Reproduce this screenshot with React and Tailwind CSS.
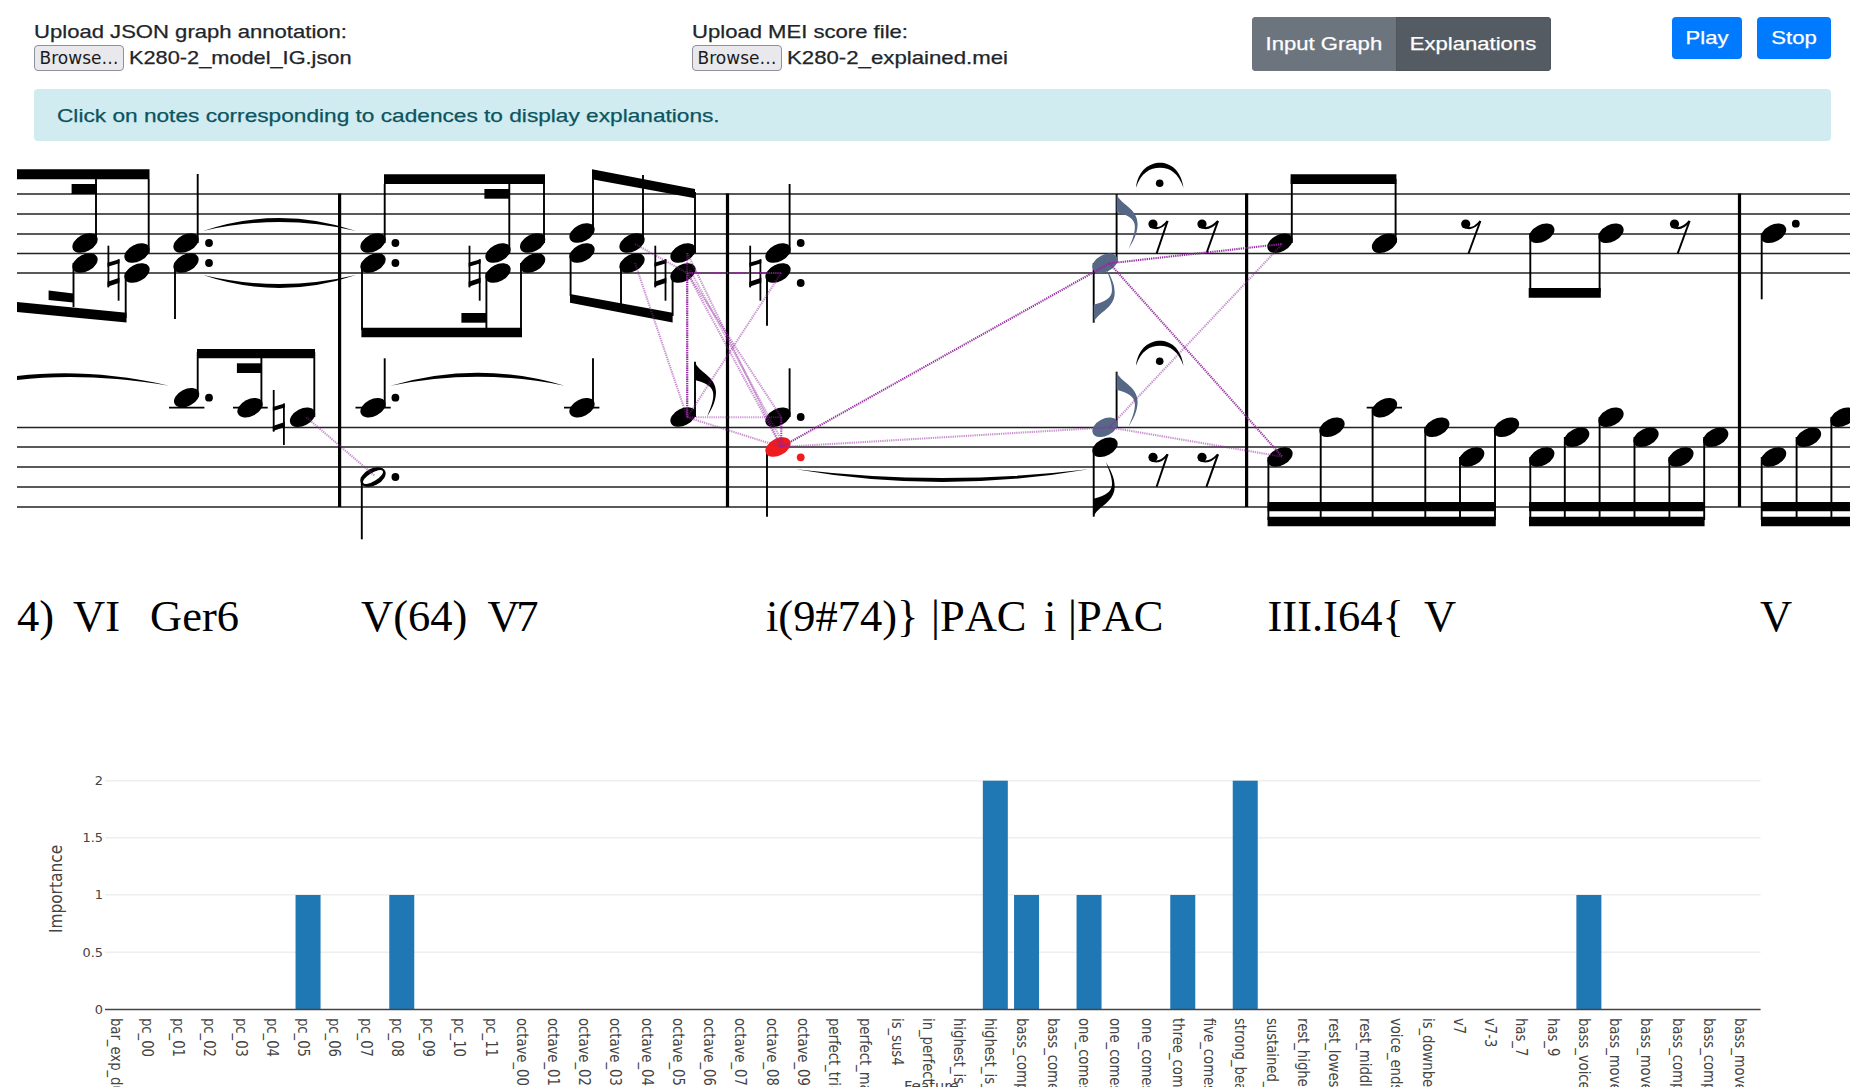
import React from "react";

const STAFF = [194, 214, 234, 253.5, 273, 427.5, 447, 467, 487, 507];
const BARLINES = [339.6, 727.5, 1246.6, 1739.5];
const SLATE = "#566885";
const RED = "#ee1c1c";

// [x, y, color]
const NOTES = [
  [85, 243], [85, 263], [137, 253], [137, 273], [186, 243], [186, 263],
  [373, 243], [373, 263], [498, 253], [498, 273], [532.6, 243], [532.6, 263],
  [582, 233], [582, 253], [632, 243], [632, 263], [683, 253], [683, 273],
  [778, 253], [778, 273], [1105, 263.3, SLATE], [1280, 243.3], [1384.5, 243.3],
  [1541.8, 233.3], [1611, 233.3], [1773.6, 233.3],
  [186.6, 397.7], [250, 407.7], [302.5, 417.3], [373, 407.7], [582, 407.7],
  [683, 417], [778, 417.3], [778, 447, RED], [1105, 427.3, SLATE], [1105, 447.3],
  [1280, 457], [1332, 427.3], [1384.5, 407.7], [1436.8, 427.3], [1471.7, 457], [1506.5, 427.3],
  [1541.8, 457], [1576.7, 437.3], [1611, 417.3], [1646, 437.3], [1680.9, 457], [1715.7, 437.3],
  [1773.6, 457], [1808.5, 437.3], [1843, 417.3],
];

// [x, y1, y2]
const STEMS = [
  [96, 179, 243], [148.7, 179, 253], [73.5, 263, 307], [125.7, 273, 318], [197.7, 174, 243], [175, 263, 319],
  [384.7, 184, 243], [509.3, 184, 253], [544, 184, 243], [362, 263, 330], [486.4, 273, 330], [521, 263, 330],
  [593, 172, 233], [570.6, 253, 296], [643, 175, 243], [695, 192, 253], [621, 263, 305], [672.6, 273, 316],
  [789.6, 184, 253], [767, 273, 325.7], [1116.6, 194, 263], [1093.7, 263, 322.7],
  [1291.8, 179, 243], [1395.6, 179, 243], [1530.3, 233, 292], [1599.6, 233, 292], [1761.7, 233, 299.3],
  [197.7, 352, 397], [261.4, 352, 407], [314.3, 352, 417], [384.7, 358.3, 407], [593, 358.3, 407],
  [695, 361.7, 417], [789.6, 368.3, 417], [767, 447, 516.7], [361.8, 477, 539.3],
  [1116.6, 371.7, 427], [1093.7, 447, 516.7],
  [1268.4, 457, 520], [1320.7, 427, 520], [1372.6, 407, 520], [1425.3, 427, 520], [1460, 457, 520], [1495, 427, 520],
  [1530.3, 457, 520], [1564.8, 437, 520], [1599.6, 417, 520], [1634.5, 437, 520], [1669.4, 457, 520], [1704.2, 437, 520],
  [1761.7, 457, 520], [1796.6, 437, 520], [1831.4, 417, 520],
];

// polygons for beams and their short sub-beams
const BEAMS = [
  "17,169.3 149.5,169.3 149.5,179.3 17,179.3", "71.6,184 97,184 97,194 71.6,194",
  "17,302 126.5,312.7 126.5,322.5 17,312", "48.6,290.5 73.5,293.5 73.5,302.5 48.6,300",
  "384,174.3 545,174.3 545,184 384,184", "484.4,189 509.3,189 509.3,198.7 484.4,198.7",
  "361.4,327.7 522,327.7 522,337.3 361.4,337.3", "461.4,313 486.4,313 486.4,322.7 461.4,322.7",
  "592,169.3 695,189 695,198.3 592,179.3", "570,294 672.6,312.7 672.6,322.4 570,302.7",
  "197,349 315,349 315,358.3 197,358.3", "236.9,363.3 261.8,363.3 261.8,373 236.9,373",
  "1290.6,174.3 1396.4,174.3 1396.4,184 1290.6,184", "1528.7,288 1600.8,288 1600.8,297.7 1528.7,297.7",
  "1267.6,502 1495.8,502 1495.8,511.3 1267.6,511.3", "1267.6,516.7 1495.8,516.7 1495.8,526.3 1267.6,526.3",
  "1529,502 1704.6,502 1704.6,511.3 1529,511.3", "1529,516.7 1704.6,516.7 1704.6,526.3 1529,526.3",
  "1761,502 1850,502 1850,511.3 1761,511.3", "1761,516.7 1850,516.7 1850,526.3 1761,526.3",
];

const DOTS = [
  [209, 243], [209, 263], [395.4, 243], [395.4, 263], [800.7, 243], [800.7, 283],
  [1795.8, 223.7], [209, 397.7], [395.4, 397.7], [395.4, 477], [800.7, 417],
  [800.7, 457.3, RED],
];

// x1, x2, y
const LEDGERS = [
  [169, 204.4, 407.7], [233, 267.7, 407.7], [355.5, 390.7, 407.7], [564, 599.4, 407.7], [1366.7, 1402, 407.7],
];

// x1, x2, y, apex
const TIES = [
  [203, 356, 231, 218], [203, 356, 275, 288], [390.7, 564.6, 385.7, 372.7], [796, 1088.6, 469.3, 482],
];

// head x, head y, stem top x, stem bottom x
const RESTS = [
  [1153, 224, 1167.6, 1156.6], [1202, 224, 1218, 1206.4], [1465.7, 224, 1480.4, 1468.5], [1674.5, 224, 1689.6, 1677.7],
  [1153, 457.3, 1167.6, 1156.6], [1202, 457.3, 1218, 1206.4],
];

const NATURALS = [[107.5, 245.7], [468.6, 245.7], [654.4, 245.7], [749.3, 245.7], [272.8, 390]];

const A = [635, 244], A2 = [635, 263], B = [687.2, 253], C = [687.2, 273], D = [781.3, 273];
const E = [687.2, 417.3], F = [781.3, 417.3], R = [781.3, 447], S = [1109.5, 263.3], T = [1109.5, 427.3];
const U = [1282.3, 244], V = [1282.3, 456.7];

// explanation edges: from, to, opacity
const EDGES = [
  [A, C, 0.5], [A2, E, 0.5], [B, E, 0.55], [C, E, 0.95], [C, D, 0.8], [C, F, 0.5], [C, R, 0.5], [B, R, 0.5],
  [[690, 270], [784, 445], 0.45], [D, E, 0.5], [E, F, 0.45], [E, R, 0.5], [F, R, 0.85], [R, S, 0.95], [R, T, 0.5],
  [S, U, 0.95], [S, V, 0.9], [T, U, 0.5], [T, V, 0.5], [[306.4, 417.3], [375, 476], 0.5],
];

const HARMONY = [
  ["4)", 17], ["VI", 73], ["Ger6", 150], ["V(64)", 361], ["i(9#74)}", 766], ["i", 1044],
  ["III.I64{", 1267.5], ["V", 1424], ["V", 1760],
];

const FEATURES = [
  "bar_exp_duration", "pc_00", "pc_01", "pc_02", "pc_03", "pc_04", "pc_05", "pc_06", "pc_07", "pc_08", "pc_09", "pc_10", "pc_11",
  "octave_00", "octave_01", "octave_02", "octave_03", "octave_04", "octave_05", "octave_06", "octave_07", "octave_08", "octave_09",
  "perfect_triad", "perfect_major", "is_sus4", "in_perfect_triad", "highest_is_third", "highest_is_fifth", "bass_compatible", "bass_comes_from",
  "one_comes_from", "one_comes_from", "one_comes_from", "three_comes_from", "five_comes_from", "strong_beat", "sustained_bass",
  "rest_highest", "rest_lowest", "rest_middle", "voice_ends", "is_downbeat", "v7", "v7-3", "has_7", "has_9", "bass_voice_leading",
  "bass_moves_one", "bass_moves_two", "bass_compatible_v", "bass_compatible_i", "bass_moves_chromatic",
];
const VALUES = { 6: 1, 9: 1, 28: 2, 29: 1, 31: 1, 34: 1, 36: 2, 47: 1 };
const TICKS = [["2", 780.7], ["1.5", 837.7], ["1", 894.7], ["0.5", 952.3]];

// the page text is rendered wide, so it is stretched along x
function Wide({ children, center, className = "scale-x-[1.1935]" }) {
  return (
    <span className={`inline-block whitespace-nowrap [-webkit-text-stroke:0.25px_currentColor] ${center ? "origin-center" : "origin-left"} ${className}`}>
      {children}
    </span>
  );
}

function FileInput({ label, file, fileScale }) {
  return (
    <div className="text-[18.5px] text-[#212529]">
      <div className="h-[28px] leading-[30px]"><Wide>{label}</Wide></div>
      <div className="flex h-[26px] items-center gap-[5px]">
        <button className="h-[26px] w-[90px] shrink-0 rounded-[4px] border border-[#8f8f9d] bg-[#e9e9ed] font-['DejaVu_Sans',sans-serif] text-[17px] leading-none text-[#1b1b1b]">
          Browse…
        </button>
        <Wide className={fileScale}>{file}</Wide>
      </div>
    </div>
  );
}

function flagPath(x, y, dir) {
  const p = (dx, dy) => `${x + dx} ${y + dir * dy}`;
  return `M${p(0, 0)} C${p(3, 10)} ${p(21, 14)} ${p(21, 30)} C${p(21, 40)} ${p(16, 48)} ${p(12, 55)} C${p(15, 47)} ${p(19.5, 38)} ${p(18, 30)} C${p(16, 22)} ${p(6, 20)} ${p(0, 18)} Z`;
}

function Fermata({ y }) {
  return (
    <g>
      <path d={`M1136 ${y + 25} C1138 ${y + 7} 1150 ${y} 1160 ${y} C1170 ${y} 1181 ${y + 7} 1183.5 ${y + 25} C1178 ${y + 10} 1170 ${y + 5} 1160 ${y + 5} C1150 ${y + 5} 1141 ${y + 10} 1136 ${y + 25} Z`} />
      <circle cx="1159.7" cy={y + 20.5} r="3.8" />
    </g>
  );
}

function Natural({ x, y }) {
  return (
    <g>
      <rect x={x} y={y} width="1.8" height="41.7" />
      <rect x={x + 10.2} y={y + 13.5} width="1.8" height="41.5" />
      <polygon points={`${x},${y + 17} ${x + 12},${y + 13.5} ${x + 12},${y + 17.5} ${x},${y + 21}`} />
      <polygon points={`${x},${y + 36} ${x + 12},${y + 32} ${x + 12},${y + 37} ${x},${y + 41}`} />
    </g>
  );
}

function Score() {
  return (
    <svg className="block h-[619px] w-full font-['Liberation_Serif','Times_New_Roman',serif]" viewBox="0 141 1850 619" fill="#000">
      {STAFF.map((y) => (
        <line key={y} x1="17" x2="1850" y1={y} y2={y} stroke="#222" strokeWidth="1.6" />
      ))}
      {BARLINES.map((x) => (
        <rect key={x} x={x - 1.6} y="193.5" width="3.2" height="313.5" />
      ))}
      {LEDGERS.map(([a, b, y]) => (
        <line key={a} x1={a} x2={b} y1={y} y2={y} stroke="#000" strokeWidth="1.8" />
      ))}
      {STEMS.map(([x, a, b], i) => (
        <line key={i} x1={x} x2={x} y1={a} y2={b} stroke="#000" strokeWidth="1.9" />
      ))}
      {BEAMS.map((points) => (
        <polygon key={points} points={points} />
      ))}
      {NOTES.map(([x, y, color], i) => (
        <ellipse key={i} cx={x} cy={y} rx="13.5" ry="8.5" transform={`rotate(-27 ${x} ${y})`} fill={color || "#000"} />
      ))}
      {/* half note in the bass */}
      <ellipse cx="373" cy="477" rx="13.5" ry="8.5" transform="rotate(-27 373 477)" />
      <ellipse cx="373" cy="477" rx="11.5" ry="4.2" transform="rotate(-32 373 477)" fill="#fff" />
      {DOTS.map(([x, y, color], i) => (
        <circle key={i} cx={x} cy={y} r="3.9" fill={color || "#000"} />
      ))}
      {TIES.map(([a, b, y, apex]) => {
        const mid = (a + b) / 2;
        const c1 = 2 * apex - y;
        const c2 = c1 + (apex < y ? 8 : -8);
        return <path key={`${a}${y}`} d={`M${a} ${y} Q${mid} ${c1} ${b} ${y} Q${mid} ${c2} ${a} ${y} Z`} />;
      })}
      <path d="M17 376 C60 371 110 372 169 385.7 C110 376 60 375 17 380 Z" />
      {RESTS.map(([hx, hy, top, bottom], i) => (
        <g key={i}>
          <circle cx={hx} cy={hy} r="4.6" />
          <path d={`M${hx - 3} ${hy + 2} Q${hx + 6} ${hy + 8} ${top} ${hy - 3}`} fill="none" stroke="#000" strokeWidth="2" />
          <line x1={top} y1={hy - 3} x2={bottom} y2={hy + 29.5} stroke="#000" strokeWidth="2" />
        </g>
      ))}
      {NATURALS.map(([x, y]) => (
        <Natural key={x} x={x} y={y} />
      ))}
      <path d={flagPath(695, 362, 1)} />
      <path d={flagPath(1116.6, 194, 1)} fill={SLATE} />
      <path d={flagPath(1116.6, 371.7, 1)} fill={SLATE} />
      <path d={flagPath(1093.7, 322.7, -1)} fill={SLATE} />
      <path d={flagPath(1093.7, 516.7, -1)} />
      <Fermata y={162.7} />
      <Fermata y={340.7} />
      {EDGES.map(([a, b, o], i) => (
        <line key={i} x1={a[0]} y1={a[1]} x2={b[0]} y2={b[1]} stroke="#92269f" strokeOpacity={o} strokeWidth="2.1" strokeDasharray="1.3 0.9" />
      ))}
      <g fontSize="44.5">
        {HARMONY.map(([label, x]) => (
          <text key={`${label}${x}`} x={x} y="631">{label}</text>
        ))}
        <text x="487.5" y="631" textLength="51">V7</text>
        <text x="931" y="631" className="[font-kerning:none]">|PAC</text>
        <text x="1068" y="631" className="[font-kerning:none]">|PAC</text>
      </g>
    </svg>
  );
}

function Chart() {
  const band = 31.24;
  return (
    <svg className="block h-[327px] w-full font-['DejaVu_Sans',Verdana,sans-serif]" viewBox="0 760 1850 327" fill="#444">
      {TICKS.map(([label, y]) => (
        <g key={label}>
          <line x1="105" x2="1760.6" y1={y} y2={y} stroke="#eee" strokeWidth="1.5" />
          <text x="103" y={y + 4.7} fontSize="12.9" textAnchor="end">{label}</text>
        </g>
      ))}
      <text x="103" y="1014" fontSize="12.9" textAnchor="end">0</text>
      {Object.entries(VALUES).map(([i, v]) => (
        <rect key={i} x={105 + band * i + 3.1} y={1009.3 - 114.3 * v} width="25" height={114.3 * v} fill="#1f77b4" />
      ))}
      <line x1="105" x2="1760.6" y1="1009.5" y2="1009.5" stroke="#444" strokeWidth="1.6" />
      {FEATURES.map((name, i) => {
        const x = 105 + band * (i + 0.5) - 10;
        return (
          <text key={i} transform={`translate(${x} 1018) rotate(90) scale(1 1.2)`} fontSize="13.2">
            {name}
          </text>
        );
      })}
      <text transform="translate(62 889) rotate(-90) scale(1 1.2)" fontSize="15.4" textAnchor="middle">Importance</text>
      <text x="904" y="1091" fontSize="14.5">Feature</text>
    </svg>
  );
}

export default function App() {
  return (
    <div className="h-[1087px] overflow-hidden bg-white font-['Liberation_Sans',Arial,sans-serif]">
      <div className="px-[19px]">
        <div className="flex items-start pl-[15px] pt-[17px]">
          <div className="w-[658px]">
            <FileInput label="Upload JSON graph annotation:" file="K280-2_model_IG.json" fileScale="scale-x-[1.176]" />
          </div>
          <div className="w-[560px]">
            <FileInput label="Upload MEI score file:" file="K280-2_explained.mei" fileScale="scale-x-[1.2]" />
          </div>
          <div className="flex h-[54px] w-[298.5px] overflow-hidden rounded-[4px] text-[18.5px] text-white">
            <div className="flex w-[144px] items-center justify-center border border-[#6c757d] bg-[#6c757d]">
              <Wide center>Input Graph</Wide>
            </div>
            <div className="flex flex-1 items-center justify-center border border-[#4e555b] bg-[#545b62]">
              <Wide center>Explanations</Wide>
            </div>
          </div>
          <div className="ml-auto flex gap-[15px] text-[18.5px] text-white">
            <div className="flex h-[42px] w-[70px] items-center justify-center rounded-[4px] bg-[#007bff]">
              <Wide center>Play</Wide>
            </div>
            <div className="flex h-[42px] w-[74px] items-center justify-center rounded-[4px] bg-[#007bff]">
              <Wide center>Stop</Wide>
            </div>
          </div>
        </div>
        <div className="ml-[15px] mt-[18px] flex h-[52px] items-center rounded-[4px] bg-[#d1ecf1] pl-[23px] pt-[2px] text-[18.5px] text-[#0c5460]">
          <Wide className="scale-x-[1.225]">Click on notes corresponding to cadences to display explanations.</Wide>
        </div>
      </div>
      <Score />
      <Chart />
    </div>
  );
}
